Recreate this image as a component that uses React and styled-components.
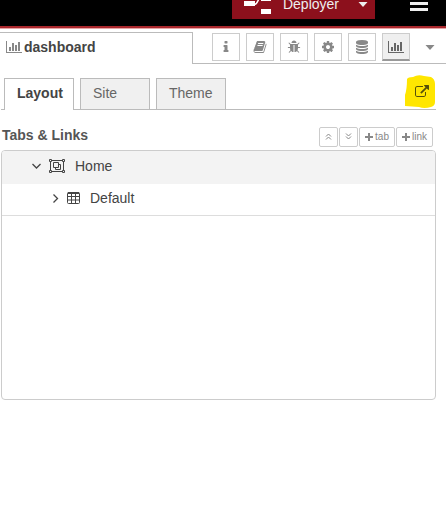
import React, { useState } from 'react';
import styled, { createGlobalStyle } from 'styled-components';

const GlobalStyle = createGlobalStyle`
    * {
        box-sizing: border-box;
    }
    body {
        margin: 0;
        background: #ffffff;
        color: #444444;
        font-family: "Liberation Sans", Arial, sans-serif;
        font-size: 14px;
        line-height: 20px;
    }
    button {
        font-family: inherit;
        margin: 0;
        cursor: pointer;
    }
    svg {
        display: block;
        flex: none;
    }
`;

const StyledHeader = styled.header`
    display: flex;
    justify-content: flex-end;
    align-items: flex-start;
    height: 28px;
    padding-right: 18px;
    background: #000000;
    border-bottom: 2px solid #a9272c;
    box-shadow: 0 1px 0 #e6a3a5;
`;

const StyledDeployGroup = styled.div`
    display: flex;
    height: 19px;
    margin-right: 35px;
    background: #8c101c;
`;

const StyledDeploy = styled.button`
    display: flex;
    align-items: flex-start;
    gap: 12px;
    padding: 0 0 0 12px;
    border: none;
    background: transparent;
    color: #eeeeee;
    font-size: 14px;
    line-height: 9px;
`;

const StyledDeployCaret = styled.button`
    display: flex;
    align-items: flex-start;
    padding: 2px 7px 0 19px;
    border: none;
    background: transparent;
    color: #eeeeee;
`;

const StyledMenu = styled.button`
    display: flex;
    padding: 0;
    border: none;
    background: transparent;
    color: #eeeeee;
`;

const StyledSidebarBar = styled.div`
    display: flex;
    height: 36px;
    padding-top: 4px;
`;

const StyledSidebarTab = styled.div`
    display: flex;
    flex: 0 0 193px;
    align-items: center;
    gap: 2px;
    padding: 0 0 3px 6px;
    border: 1px solid #bbbbbb;
    border-width: 1px 1px 0 0;
    color: #444444;
    font-weight: bold;
    svg {
        color: #888888;
    }
`;

const StyledTools = styled.div`
    display: flex;
    flex: 1;
    justify-content: flex-end;
    gap: 6px;
    padding: 1px 8px 0 0;
    border-bottom: 1px solid #bbbbbb;
`;

const StyledTool = styled.button`
    display: flex;
    align-items: center;
    justify-content: center;
    width: 28px;
    height: 28px;
    padding: 0;
    border: 1px solid #cccccc;
    border-bottom: ${({ $active }) => ($active ? '2px solid #999999' : '1px solid #cccccc')};
    background: ${({ $active }) => ($active ? '#efefef' : '#ffffff')};
    color: ${({ $active }) => ($active ? '#666666' : '#888888')};
`;

const StyledToolCaret = styled.button`
    display: flex;
    align-items: center;
    height: 28px;
    padding: 0 3px 0 9px;
    border: none;
    background: transparent;
    color: #888888;
`;

const StyledTabs = styled.nav`
    display: flex;
    align-items: flex-end;
    gap: 6px;
    height: 35px;
    margin: 11px 10px 0 1px;
    padding-left: 3px;
    border-bottom: 1px solid #bbbbbb;
`;

const StyledTab = styled.button`
    width: 70px;
    height: ${({ $active }) => ($active ? '32px' : '31px')};
    margin-bottom: ${({ $active }) => ($active ? '-1px' : '0')};
    padding: ${({ $active }) => ($active ? '0 0 3px 12px' : '0 0 2px 12px')};
    border: 1px solid #bbbbbb;
    border-bottom: none;
    background: ${({ $active }) => ($active ? '#ffffff' : '#f0f0f0')};
    color: ${({ $active }) => ($active ? '#444444' : '#666666')};
    font-size: 14px;
    font-weight: ${({ $active }) => ($active ? 'bold' : 'normal')};
    text-align: left;
`;

const StyledHighlight = styled.a`
    position: relative;
    display: flex;
    align-items: center;
    justify-content: flex-end;
    width: 32px;
    height: 34px;
    margin-left: auto;
    padding-right: 7px;
    color: #55500a;
`;

const StyledMarker = styled.svg`
    position: absolute;
    inset: 0;
    z-index: -1;
`;

const StyledSection = styled.div`
    display: flex;
    align-items: center;
    justify-content: space-between;
    padding: 15px 13px 3px 2px;
`;

const StyledSectionTitle = styled.div`
    padding-bottom: 2px;
    color: #555555;
    font-weight: bold;
`;

const StyledActions = styled.div`
    display: flex;
    gap: 1px;
    padding-top: 1px;
`;

const StyledAction = styled.button`
    display: flex;
    align-items: center;
    justify-content: center;
    gap: 2px;
    height: 20px;
    padding: 0 5px;
    border: 1px solid #cccccc;
    border-radius: 2px;
    background: #ffffff;
    color: #888888;
    font-size: 10px;
`;

const StyledTree = styled.div`
    height: 250px;
    margin: 0 10px 0 1px;
    border: 1px solid #cccccc;
    border-radius: 4px;
    overflow: hidden;
`;

const StyledNode = styled.div`
    display: flex;
    align-items: center;
    height: ${({ $root }) => ($root ? '33px' : '32px')};
    padding: ${({ $root }) => ($root ? '0 0 3px 30px' : '0 0 3px 48px')};
    border-bottom: ${({ $root }) => ($root ? 'none' : '1px solid #dddddd')};
    background: ${({ $root }) => ($root ? '#f3f3f3' : '#ffffff')};
`;

const StyledNodeIcon = styled.span`
    display: flex;
    margin: ${({ $root }) => ($root ? '0 10px 0 8px' : '0 10px 0 7px')};
`;

const paths = {
    info: 'M1216 1344v128q0 26-19 45t-45 19h-512q-26 0-45-19t-19-45v-128q0-26 19-45t45-19h64v-384h-64q-26 0-45-19t-19-45v-128q0-26 19-45t45-19h384q26 0 45 19t19 45v576h64q26 0 45 19t19 45zM1088 192v192q0 26-19 45t-45 19h-256q-26 0-45-19t-19-45v-192q0-26 19-45t45-19h256q26 0 45 19t19 45z',
    book: 'M1703 478q40 57 18 129l-275 906q-19 64-76.5 107.5t-122.5 43.5h-923q-77 0-148.5-53.5t-99.5-131.5q-24-67-2-127 0-4 3-27t4-37q1-8-3-21.5t-3-19.5q2-11 8-21t16.5-23.5 16.5-23.5q23-38 45-91.5t30-91.5q3-10 .5-30t-.5-28q3-11 17-28t17-23q21-36 42-92t25-90q1-9-2.5-32t.5-28q4-13 22-30.5t22-22.5q19-26 42.5-84.5t27.5-96.5q1-8-3-25.5t-2-26.5q2-8 9-18t18-23 17-21q8-12 16.5-30.5t15-35 16-36 19.5-32 26.5-23.5 36-11.5 47.5 5.5l-1 3q38-9 51-9h761q74 0 114 56t18 130l-274 906q-36 119-71.5 153.5t-128.5 34.5h-869q-27 0-38 15-11 16-1 43 24 70 144 70h923q29 0 56-15.5t35-41.5l300-987q7-22 5-57 38 15 59 43zm-1064 2q-4 13 2 22.5t20 9.5h608q13 0 25.5-9.5t16.5-22.5l21-64q4-13-2-22.5t-20-9.5h-608q-13 0-25.5 9.5t-16.5 22.5zm-83 256q-4 13 2 22.5t20 9.5h608q13 0 25.5-9.5t16.5-22.5l21-64q4-13-2-22.5t-20-9.5h-608q-13 0-25.5 9.5t-16.5 22.5z',
    bug: 'M1696 960q0 26-19 45t-45 19h-224q0 171-67 290l208 209q19 19 19 45t-19 45q-18 19-45 19t-45-19l-198-197q-5 5-15 13t-42 28.5-65 36.5-82 29-97 13v-896h-128v896q-51 0-101.5-13.5t-87-33-66-39-43.5-32.5l-15-14-183 207q-20 21-48 21-24 0-43-16-19-18-20.5-44.5t15.5-46.5l202-227q-58-114-58-274h-224q-26 0-45-19t-19-45 19-45 45-19h224v-294l-173-173q-19-19-19-45t19-45 45-19 45 19l173 173h844l173-173q19-19 45-19t45 19 19 45-19 45l-173 173v294h224q26 0 45 19t19 45zm-480-576h-640q0-133 93.5-226.5t226.5-93.5 226.5 93.5 93.5 226.5z',
    cog: 'M1152 896q0-106-75-181t-181-75-181 75-75 181 75 181 181 75 181-75 75-181zm512-109v222q0 12-8 23t-20 13l-185 28q-19 54-39 91 35 50 107 138 10 12 10 25t-9 23q-27 37-99 108t-94 71q-12 0-26-9l-138-108q-44 23-91 38-16 136-29 186-7 28-36 28h-222q-14 0-24.5-8.5t-11.5-21.5l-28-184q-49-16-90-37l-141 107q-10 9-25 9-14 0-25-11-126-114-165-168-7-10-7-23 0-12 8-23 15-21 51-66.5t54-70.5q-27-50-41-99l-183-27q-13-2-21-12.5t-8-23.5v-222q0-12 8-23t19-13l186-28q14-46 39-92-40-57-107-138-10-12-10-24 0-10 9-23 26-36 98.5-107.5t94.5-71.5q13 0 26 10l138 107q44-23 91-38 16-136 29-186 7-28 36-28h222q14 0 24.5 8.5t11.5 21.5l28 184q49 16 90 37l142-107q9-9 24-9 13 0 25 10 129 119 165 170 7 8 7 22 0 12-8 23-15 21-51 66.5t-54 70.5q26 50 41 98l183 28q13 2 21 12.5t8 23.5z',
    database: 'M896 768q237 0 443-43t325-127v170q0 69-103 128t-280 93.5-385 34.5-385-34.5-280-93.5-103-128v-170q119 84 325 127t443 43zm0 768q237 0 443-43t325-127v170q0 69-103 128t-280 93.5-385 34.5-385-34.5-280-93.5-103-128v-170q119 84 325 127t443 43zm0-384q237 0 443-43t325-127v170q0 69-103 128t-280 93.5-385 34.5-385-34.5-280-93.5-103-128v-170q119 84 325 127t443 43zm0-1152q208 0 385 34.5t280 93.5 103 128v128q0 69-103 128t-280 93.5-385 34.5-385-34.5-280-93.5-103-128v-128q0-69 103-128t280-93.5 385-34.5z',
    external: 'M1408 928v320q0 119-84.5 203.5t-203.5 84.5h-832q-119 0-203.5-84.5t-84.5-203.5v-832q0-119 84.5-203.5t203.5-84.5h704q14 0 23 9t9 23v64q0 14-9 23t-23 9h-704q-66 0-113 47t-47 113v832q0 66 47 113t113 47h832q66 0 113-47t47-113v-320q0-14 9-23t23-9h64q14 0 23 9t9 23zm384-864v512q0 26-19 45t-45 19-45-19l-176-176-652 652q-10 10-23 10t-23-10l-114-114q-10-10-10-23t10-23l652-652-176-176q-19-19-19-45t19-45 45-19h512q26 0 45 19t19 45z',
};

const Icon = ({ name, size = 14 }) => (
    <svg width={size} height={size} viewBox="0 0 1792 1792" fill="currentColor">
        <path d={paths[name]} />
    </svg>
);

const ChartIcon = () => (
    <svg width="16" height="14" viewBox="0 0 2048 1792" fill="currentColor">
        <path d="M640 896v512h-256v-512h256zm384-512v1024h-256v-1024h256zm1024 1152v128h-2048v-1536h128v1408h1920zm-640-896v768h-256v-768h256zm384-384v1152h-256v-1152h256z" />
    </svg>
);

const Caret = () => (
    <svg width="10" height="5" viewBox="0 0 10 5" fill="currentColor">
        <path d="M.5 0h9L5 5z" />
    </svg>
);

const PlusIcon = () => (
    <svg width="8" height="8" viewBox="0 0 8 8" fill="currentColor">
        <path d="M3 0h2v3h3v2H5v3H3V5H0V3h3z" />
    </svg>
);

const Stroke = ({ d, width, height, weight = 1 }) => (
    <svg width={width} height={height} viewBox={`0 0 ${width} ${height}`} fill="none" stroke="currentColor" strokeWidth={weight}>
        <path d={d} />
    </svg>
);

const DeployIcon = () => (
    <svg width="27" height="14" viewBox="0 0 27 14">
        <path d="M10 4.5C15 4.5 13-3 18-3" fill="none" stroke="#fff" strokeWidth="1.5" />
        <path d="M0 1h11v5H0zM17-4h10v5H17zM17 9h10v5H17z" fill="#fff" />
    </svg>
);

const GroupIcon = () => (
    <svg width="16" height="14" viewBox="0 0 16 14" fill="none" stroke="currentColor">
        <path d="M3 1.5h10M3 12.5h10M1.5 3v8M14.5 3v8" />
        <path d="M4.5 3.5h5v5h-5zM10 5.5h1.5v5h-5V9" />
        <path d="M.5.5h2v2h-2zM13.5.5h2v2h-2zM.5 11.5h2v2h-2zM13.5 11.5h2v2h-2z" />
    </svg>
);

const TableIcon = () => (
    <svg width="13" height="12" viewBox="0 0 13 12" fill="none" stroke="currentColor">
        <path d="M1 1h11" strokeWidth="2" />
        <rect x=".5" y=".5" width="12" height="11" rx="1" />
        <path d="M1 4.5h11M1 8h11M4.5 1v10M8.5 1v10" />
    </svg>
);

const tools = ['info', 'book', 'bug', 'cog', 'database'];

const App = () => {
    const [tab, setTab] = useState('Layout');

    return (
        <>
            <GlobalStyle />
            <StyledHeader>
                <StyledDeployGroup>
                    <StyledDeploy><DeployIcon />Déployer</StyledDeploy>
                    <StyledDeployCaret aria-label="Options"><Caret /></StyledDeployCaret>
                </StyledDeployGroup>
                <StyledMenu aria-label="Menu">
                    <Stroke width={18} height={12} weight={3} d="M0 3.5h18M0 9.5h18" />
                </StyledMenu>
            </StyledHeader>
            <StyledSidebarBar>
                <StyledSidebarTab><ChartIcon />dashboard</StyledSidebarTab>
                <StyledTools>
                    {tools.map((name) => (
                        <StyledTool key={name} aria-label={name}><Icon name={name} /></StyledTool>
                    ))}
                    <StyledTool $active aria-label="dashboard"><ChartIcon /></StyledTool>
                    <StyledToolCaret aria-label="more"><Caret /></StyledToolCaret>
                </StyledTools>
            </StyledSidebarBar>
            <StyledTabs>
                {['Layout', 'Site', 'Theme'].map((name) => (
                    <StyledTab key={name} $active={tab === name} onClick={() => setTab(name)}>{name}</StyledTab>
                ))}
                <StyledHighlight href="#" aria-label="open dashboard">
                    <StyledMarker width="32" height="34" viewBox="0 0 32 34">
                        <path d="M3 4Q4 2 9 2Q14-1 20 1L27 2Q31 4 31 9V27Q31 31 27 32Q20 34 15 32L1 31V20Q3 14 3 4z" fill="#ffe600" />
                    </StyledMarker>
                    <Icon name="external" />
                </StyledHighlight>
            </StyledTabs>
            <StyledSection>
                <StyledSectionTitle>Tabs &amp; Links</StyledSectionTitle>
                <StyledActions>
                    <StyledAction aria-label="collapse"><Stroke width={7} height={7} d="M1 3.5L3.5 1 6 3.5M1 6.5L3.5 4 6 6.5" /></StyledAction>
                    <StyledAction aria-label="expand"><Stroke width={7} height={7} d="M1 .5L3.5 3 6 .5M1 3.5L3.5 6 6 3.5" /></StyledAction>
                    <StyledAction><PlusIcon />tab</StyledAction>
                    <StyledAction><PlusIcon />link</StyledAction>
                </StyledActions>
            </StyledSection>
            <StyledTree>
                <StyledNode $root>
                    <Stroke width={9} height={6} d="M.5 1l4 4 4-4" weight={1.3} />
                    <StyledNodeIcon $root><GroupIcon /></StyledNodeIcon>
                    Home
                </StyledNode>
                <StyledNode>
                    <Stroke width={10} height={9} d="M3.5.5l4 4-4 4" weight={1.3} />
                    <StyledNodeIcon><TableIcon /></StyledNodeIcon>
                    Default
                </StyledNode>
            </StyledTree>
        </>
    );
};

export default App;
